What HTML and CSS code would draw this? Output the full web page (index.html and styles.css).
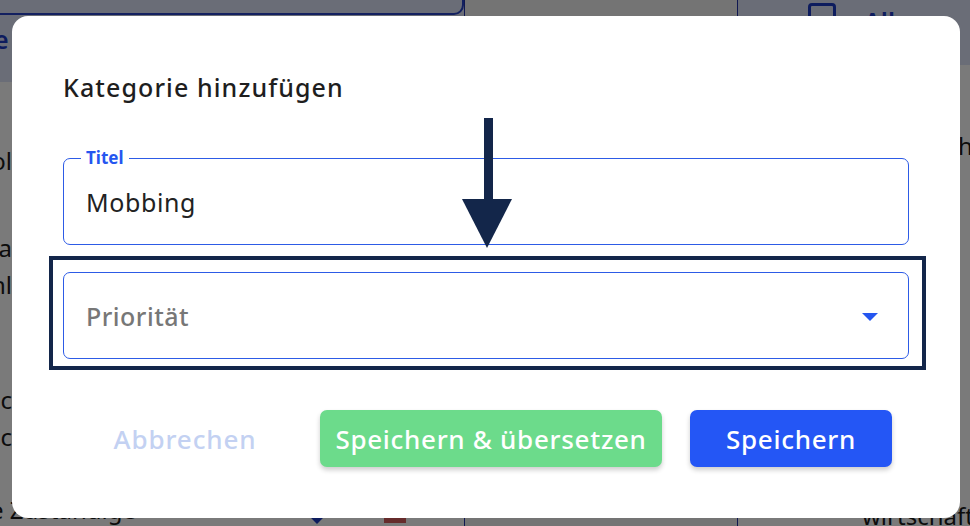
FILE: index.html
```html
<!DOCTYPE html>
<html lang="de">
<head>
<meta charset="utf-8">
<title>Kategorie hinzufügen</title>
<link rel="stylesheet" href="styles.css">
</head>
<body>
<div class="page">
  <div class="pane pane-left">
    <div class="band band-left"><span class="band-btn"></span><span class="band-text">e</span></div>
    <div class="clip-lines">
      <p class="bl l1">Alkohol</p>
      <p class="bl l2">Konflikt da</p>
      <p class="bl l3">Ausschl</p>
      <p class="bl l4">Diskriminierung c</p>
      <p class="bl l5">Privatsphäre ic</p>
    </div>
    <p class="bl l6">e Zuständige</p>
    <div class="row-icons"><span class="pen"></span><span class="bin"></span></div>
  </div>
  <div class="pane pane-mid"></div>
  <div class="pane pane-right">
    <div class="band band-right"><span class="chk"></span><span class="band-text">Alle u</span></div>
    <div class="right-lines">
      <p class="br r1">lich</p>
      <p class="br r2">s</p>
      <p class="br r3">zu</p>
      <p class="br r4">n</p>
      <p class="br r5">er</p>
      <p class="br r6">u</p>
      <p class="br r7">wirtschaft</p>
    </div>
  </div>
</div>
<div class="overlay"></div>

<div class="dialog">
  <h2 class="dialog-title">Kategorie hinzufügen</h2>
  <div class="fields">
    <div class="field">
      <span class="field-legend">Titel</span>
      <span class="field-value">Mobbing</span>
    </div>
    <div class="field field-select">
      <span class="field-placeholder">Priorität</span>
      <svg class="caret" width="16" height="8" viewBox="0 0 16 8"><path d="M0 0H16L8 8Z" fill="#2556f0"/></svg>
    </div>
  </div>
  <div class="actions">
    <button class="btn btn-text">Abbrechen</button>
    <button class="btn btn-green">Speichern &amp; übersetzen</button>
    <button class="btn btn-blue">Speichern</button>
  </div>
  <div class="highlight"></div>
  <svg class="arrow" width="52" height="132" viewBox="0 0 52 132">
    <rect x="22" y="0" width="9" height="84" fill="#13264a"/>
    <path d="M0 81H50L25 130Z" fill="#13264a"/>
  </svg>
</div>
</body>
</html>
```
FILE: styles.css
```css
* { box-sizing: border-box; }
html, body { margin: 0; padding: 0; }
body {
  width: 970px;
  height: 526px;
  overflow: hidden;
  position: relative;
  font-family: "Noto Sans", "Open Sans", sans-serif;
  background: #fff;
}
p { margin: 0; }

.page {
  display: grid;
  grid-template-columns: 465px 272px 1fr;
  height: 526px;
  font-size: 24px;
  color: #1a1a1a;
}
.pane { position: relative; overflow: hidden; }
.pane-left { border-right: 1px solid #2233aa; background: #fff; }
.pane-mid { background: #f2f2f2; }
.pane-right { border-left: 1px solid #2233aa; background: #fff; }

.band {
  display: flex;
  align-items: center;
  background: #dde3f8;
}
.band-left { height: 82px; position: relative; }
.band-right { height: 65px; padding-left: 70px; gap: 28px; }
.band-btn {
  position: absolute;
  left: -20px; right: 0; top: -20px; height: 35px;
  border: 2px solid #2844c8;
  border-radius: 10px;
}
.band-text { color: #1d3bc4; font-weight: 600; font-size: 25px; }
.band-left .band-text { margin-left: -6px; margin-top: -4px; }
.band-right .band-text { margin-top: -24px; }
.chk {
  width: 28px; height: 26px;
  border: 3px solid #1d3bc4;
  border-radius: 4px;
  margin-top: -34px;
}

.clip-lines {
  width: 12px;
  display: flex;
  flex-direction: column;
  align-items: flex-end;
  white-space: nowrap;
}
.bl { line-height: 37px; }
.l1 { margin-top: 60px; }
.l2 { margin-top: 50px; }
.l3 { margin-top: 0; }
.l4 { margin-top: 78px; }
.l5 { margin-top: 0; }
.l6 { margin-top: 36px; margin-left: -10px; white-space: nowrap; }

.row-icons {
  position: absolute;
  left: 310px; top: 507px;
  display: flex; gap: 60px;
}
.pen { width: 14px; height: 14px; background: #1d3bc4; transform: rotate(45deg); }
.bin { width: 22px; height: 16px; border-top: 3px solid #c23a3a; background: #d65a5a; }

.right-lines { padding-left: 196px; white-space: nowrap; }
.br { line-height: 37px; }
.r1 { margin-top: 62px; }
.r2 { margin-top: 57px; }
.r3 { margin-top: 53px; }
.r4 { margin-top: 0; }
.r5 { margin-top: 0; }
.r6 { margin-top: 38px; }
.r7 { margin-top: 0; margin-left: -72px; }

.overlay {
  position: absolute;
  inset: 0;
  background: rgba(0, 0, 0, 0.52);
}

.dialog {
  position: absolute;
  left: 12px; top: 16px;
  width: 948px; height: 502px;
  background: #fff;
  border-radius: 16px;
  padding: 53px 51px 0 51px;
}
.dialog-title {
  margin: 0;
  font-size: 25px;
  font-weight: 500;
  letter-spacing: 1.1px;
  color: #1e1e1e;
  line-height: 36px;
}
.fields {
  margin-top: 53px;
  display: flex;
  flex-direction: column;
  gap: 27px;
}
.field {
  position: relative;
  height: 87px;
  border: 1px solid #2d5be6;
  border-radius: 7px;
  display: flex;
  align-items: center;
  padding: 0 30px 0 22px;
}
.field-legend {
  position: absolute;
  left: 17px; top: -11px;
  background: #fff;
  font-size: 17px;
  font-weight: 700;
  color: #2556f0;
  padding: 0 5px;
  line-height: 20px;
}
.field-value { font-size: 25px; color: #222; letter-spacing: 0.6px; }
.field-select { justify-content: space-between; }
.field-placeholder { font-size: 25px; color: #777; font-weight: 500; letter-spacing: 0.5px; }
.caret { display: block; margin-top: 2px; }

.actions {
  margin-top: 51px;
  display: flex;
  justify-content: flex-end;
  gap: 28px;
  padding-right: 17px;
}
.btn {
  height: 57px;
  border: 0;
  border-radius: 7px;
  font-family: inherit;
  font-size: 26px;
  font-weight: 500;
  letter-spacing: 0.7px;
  padding: 0;
  cursor: pointer;
}
.btn-text { width: 214px; background: transparent; color: #c3d1f2; letter-spacing: 0.9px; }
.btn-green { width: 342px; background: #6cdb8b; color: #fff; box-shadow: 0 3px 5px rgba(0,0,0,0.2); }
.btn-blue { width: 202px; background: #2456f5; color: #fff; box-shadow: 0 3px 5px rgba(0,0,0,0.2); }

.highlight {
  position: absolute;
  left: 37px; top: 240px;
  width: 877px; height: 114px;
  border: 4px solid #13264a;
  pointer-events: none;
}
.arrow {
  position: absolute;
  left: 450px; top: 102px;
}
```
